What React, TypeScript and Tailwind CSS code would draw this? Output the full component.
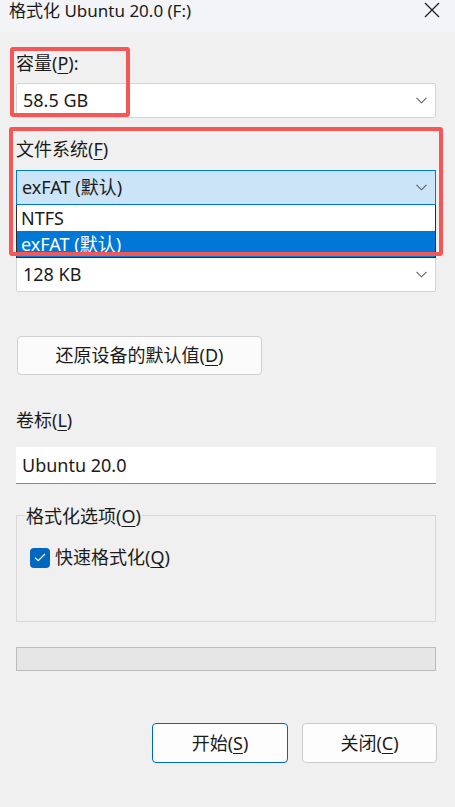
import React from 'react';

const font = { fontFamily: '"Noto Sans", "Noto Sans CJK SC", sans-serif' };

function Chevron() {
  return (
    <svg width="11" height="7" viewBox="0 0 11 7" fill="none">
      <path d="M0.5 0.8 L5.5 5.8 L10.5 0.8" stroke="#5f5f5f" strokeWidth="1.1" />
    </svg>
  );
}

function U({ children }: { children: React.ReactNode }) {
  return <span className="underline underline-offset-[3px] decoration-[1px]">{children}</span>;
}

export default function App() {
  return (
    <div
      className="relative w-[455px] h-[807px] overflow-hidden bg-[#f0f0f0] text-[18px] text-[#1b1b1b]"
      style={font}
    >
      {/* title bar */}
      <div className="h-[32px] bg-[#f3f4f8] flex items-start justify-between pl-[9px] pr-[15px]">
        <span className="leading-[22px] text-[17px]">格式化 Ubuntu 20.0 (F:)</span>
        <svg width="16" height="16" viewBox="0 0 16 16" className="mt-[2px]">
          <path d="M1 1 L15 15 M15 1 L1 15" stroke="#1f1f1f" strokeWidth="1.3" />
        </svg>
      </div>

      <div className="flex flex-col pl-4 w-[436px]">
        {/* capacity */}
        <div className="mt-[19px] h-6 flex items-center">
          容量(<U>P</U>):
        </div>
        <div className="mt-2 h-[35px] bg-white border border-[#d4d4d4] rounded-[2px] flex items-center justify-between pl-[6px] pr-[8px]">
          <span>58.5 GB</span>
          <Chevron />
        </div>

        {/* file system */}
        <div className="mt-[19px] h-6 flex items-center">
          文件系统(<U>F</U>)
        </div>
        <div className="mt-[9px] h-[35px] bg-[#cce4f7] border border-[#0078d4] flex items-center justify-between pl-[5px] pr-[8px]">
          <span>exFAT (默认)</span>
          <Chevron />
        </div>
        <div className="relative h-[52px]">
          <div className="absolute left-0 right-0 top-0 z-10 bg-white border-x border-b border-[#2a2a2a] flex flex-col">
            <div className="h-[26px] flex items-center pl-[4px] leading-none">NTFS</div>
            <div className="h-[26px] flex items-center pl-[4px] leading-none bg-[#0078d7] text-white">exFAT (默认)</div>
          </div>
        </div>

        {/* allocation unit */}
        <div className="h-[35px] bg-white border border-[#d4d4d4] rounded-[2px] flex items-center justify-between pl-[6px] pr-[8px]">
          <span>128 KB</span>
          <Chevron />
        </div>

        {/* restore defaults */}
        <button className="mt-[44px] ml-[1px] h-[39px] w-[245px] bg-[#fbfbfb] border border-[#d0d0d0] rounded-[4px] flex items-center justify-center">
          还原设备的默认值(<U>D</U>)
        </button>

        {/* volume label */}
        <div className="mt-[33px] h-6 flex items-center">
          卷标(<U>L</U>)
        </div>
        <div className="mt-[15px] h-[37px] bg-white border-b border-[#8a8a8a] flex items-center pl-[6px]">
          Ubuntu 20.0
        </div>

        {/* format options */}
        <div className="relative mt-[31px] h-[107px] border border-[#d9d9d9]">
          <div className="absolute left-[8px] top-[-12px] px-[1px] bg-[#f0f0f0] leading-6">
            格式化选项(<U>O</U>)
          </div>
          <div className="mt-[28px] ml-[13px] flex items-center gap-[5px]">
            <div className="w-5 h-5 rounded-[4px] bg-[#0067c0] flex items-center justify-center">
              <svg width="12" height="9" viewBox="0 0 12 9" fill="none">
                <path d="M1 4.6 L4.2 7.6 L11 1" stroke="white" strokeWidth="1.2" />
              </svg>
            </div>
            <span>快速格式化(<U>Q</U>)</span>
          </div>
        </div>

        {/* progress */}
        <div className="mt-[25px] h-[24px] bg-[#e6e6e6] border border-[#bcbcbc]" />

        {/* actions */}
        <div className="mt-[52px] flex justify-end gap-[14px] mr-[-1px]">
          <button className="h-[40px] w-[136px] bg-[#fdfdfd] border border-[#0067c0] rounded-[4px] flex items-center justify-center">
            开始(<U>S</U>)
          </button>
          <button className="h-[40px] w-[135px] bg-[#fdfdfd] border border-[#cccccc] rounded-[4px] flex items-center justify-center">
            关闭(<U>C</U>)
          </button>
        </div>
      </div>

      {/* red annotation boxes */}
      <div className="absolute left-[10px] top-[47px] w-[120px] h-[70px] border-4 border-[#f55656] rounded-[3px] pointer-events-none z-20" />
      <div className="absolute left-[9px] top-[127px] w-[434px] h-[129px] border-4 border-[#f55656] rounded-[3px] pointer-events-none z-20" />
    </div>
  );
}
